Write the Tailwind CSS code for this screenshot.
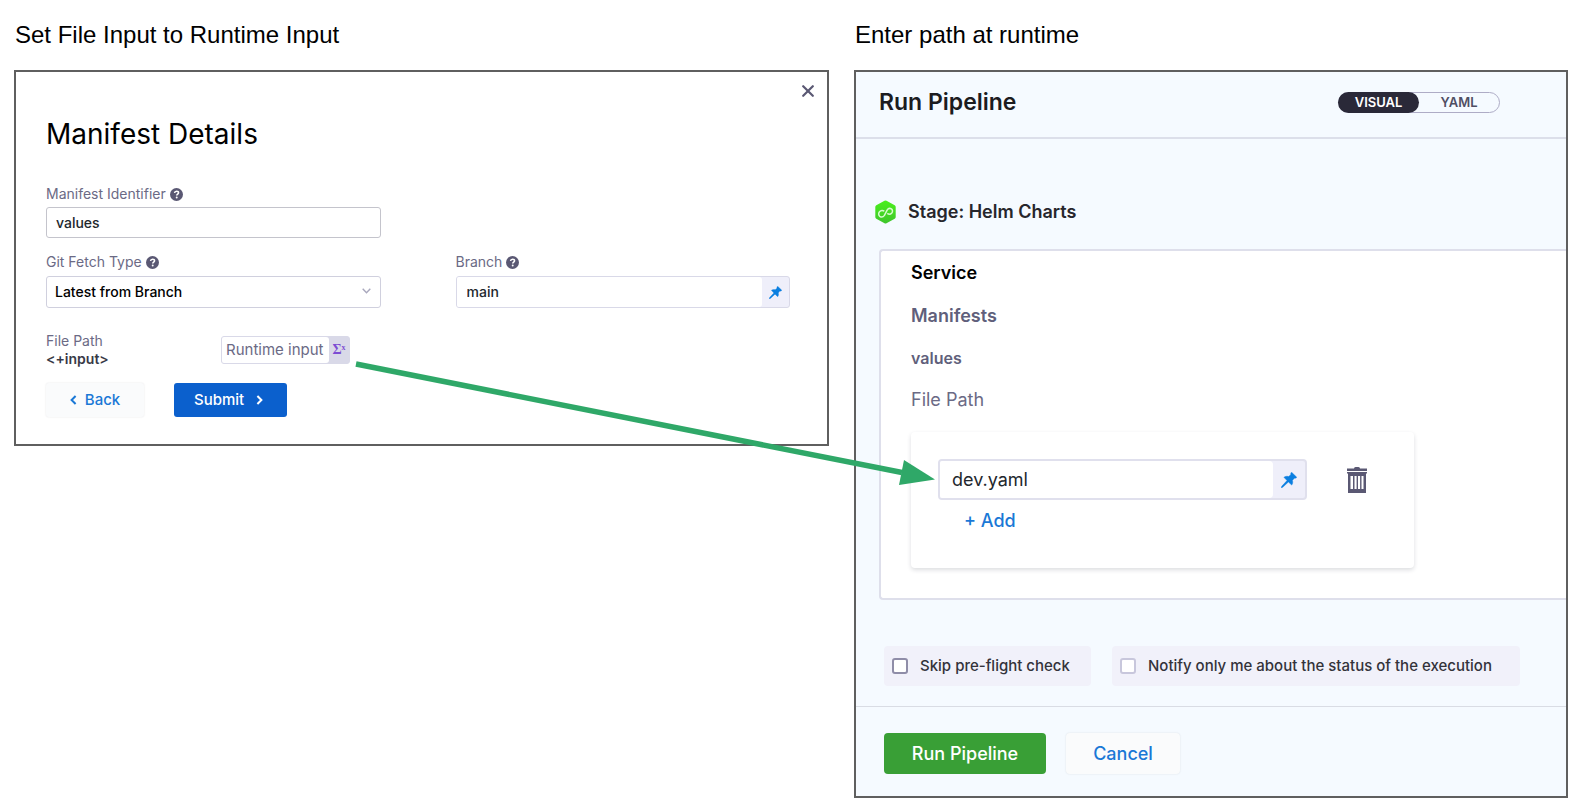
<!DOCTYPE html>
<html lang="en">
<head>
    <meta charset="UTF-8">
    <meta name="viewport" content="width=device-width, initial-scale=1.0">
    <title>Runtime Input</title>
    <script src="https://cdn.jsdelivr.net/npm/@tailwindcss/browser@4"></script>
</head>
<body class="bg-white text-black font-['Inter',sans-serif]">

    <!-- Shared icons -->
    <svg class="hidden">
        <symbol id="help" viewBox="0 0 12 12">
            <circle cx="6" cy="6" r="6" fill="#5a5873"/>
            <path d="M4.2 4.6C4.3 3.4 5 2.9 6.1 2.9c1.1 0 1.8.6 1.8 1.5C7.9 5.6 6.2 5.7 6.2 7" fill="none" stroke="#fff" stroke-width="1.4"/>
            <circle cx="6.2" cy="8.8" r=".9" fill="#fff"/>
        </symbol>
        <symbol id="pin" viewBox="0 0 16 16">
            <path d="M10.6.2 15.8 5.3C15 6.3 14.2 6.5 13.3 6.2L11.4 8.6C12.1 10.3 11.7 12 10.7 13.1L7.4 10 1.7 15.3.2 15.9.7 14.3 6 8.6 2.9 5.3C4.4 4.2 6 4 7.5 4.6L9.8 2.7C9.5 1.8 9.8.9 10.6.2Z" fill="#0b7fe0" stroke="#0b7fe0" stroke-width=".4"/>
        </symbol>
    </svg>

    <main class="relative grid grid-cols-[815fr_714fr] items-start gap-x-[25px] pt-[19px] pr-[10px] pl-[14px]">

        <!-- Manifest details -->
        <section>
            <h2 class="mb-[19px] pl-px font-['Liberation_Sans',sans-serif] text-2xl">Set File Input to Runtime Input</h2>

            <form class="relative border-2 border-[#5f5f5f] pt-[42px] pr-[37px] pb-[27px] pl-[30px]">
                <button type="button" aria-label="Close" class="absolute top-[13px] right-[13px]">
                    <svg class="size-3" viewBox="0 0 12 12"><path d="M1.2 1.2 10.8 10.8M10.8 1.2 1.2 10.8" stroke="#5a5873" stroke-width="2.2" stroke-linecap="round"/></svg>
                </button>

                <h1 class="text-[28px] leading-10">Manifest Details</h1>

                <div class="mt-[30px] grid grid-cols-2 gap-x-[75px] gap-y-[14px]">
                    <div>
                        <div class="flex h-5 items-center gap-1 text-sm text-[#6b6a85]">
                            <label for="identifier">Manifest Identifier</label>
                            <svg class="size-[13px]"><use href="#help"/></svg>
                        </div>
                        <input id="identifier" type="text" value="values" class="mt-[3px] h-[31px] w-full rounded-[3px] border border-[#c4c4cc] px-[9px] text-sm font-medium text-[#22272d]">
                    </div>
                    <div></div>
                    <div>
                        <div class="flex h-5 items-center gap-1 text-sm text-[#6b6a85]">
                            <label for="fetch">Git Fetch Type</label>
                            <svg class="size-[13px]"><use href="#help"/></svg>
                        </div>
                        <div class="relative mt-1">
                            <select id="fetch" class="h-8 w-full appearance-none rounded-[3px] border border-[#d0d0de] px-2 text-sm font-medium">
                                <option>Latest from Branch</option>
                            </select>
                            <svg class="pointer-events-none absolute top-3 right-[10px] h-[6px] w-[9px]" viewBox="0 0 9 6"><path d="M.7.8 4.5 4.8 8.3.8" fill="none" stroke="#a9a8bd" stroke-width="1.4"/></svg>
                        </div>
                    </div>
                    <div>
                        <div class="flex h-5 items-center gap-1 text-sm text-[#6b6a85]">
                            <label for="branch">Branch</label>
                            <svg class="size-[13px]"><use href="#help"/></svg>
                        </div>
                        <div class="mt-1 flex h-8 overflow-hidden rounded-[3px] border border-[#d9d9e8] bg-[#efeffa]">
                            <input id="branch" type="text" value="main" class="min-w-0 flex-1 rounded-r-[3px] bg-white px-[10px] text-sm font-medium text-[#22272d]">
                            <button type="button" aria-label="Value type" class="grid w-[27px] place-items-center"><svg class="size-[13px]"><use href="#pin"/></svg></button>
                        </div>
                    </div>
                </div>

                <div class="mt-[23px] flex items-start">
                    <div class="w-[175px] text-sm leading-5 text-[#6b6a85]">
                        <label for="path">File Path</label>
                        <p class="text-sm leading-4 font-semibold text-[#383946]">&lt;+input&gt;</p>
                    </div>
                    <div class="mt-[5px] flex h-7 overflow-hidden rounded-[3px] border border-[#d9d9e8] bg-[#d9d9e8]">
                        <input id="path" type="text" value="Runtime input" readonly class="w-[107px] rounded-r-[3px] bg-white px-1 text-[15px] text-[#6b6a85]">
                        <button type="button" aria-label="Value type" class="w-5 font-['Liberation_Serif',serif] text-sm font-bold text-[#7d4dd3]">Σ<sup class="text-[8px]">x</sup></button>
                    </div>
                </div>

                <div class="mt-4 flex gap-[30px]">
                    <button type="button" class="flex h-[34px] w-[98px] items-center justify-center gap-2 rounded-[3px] bg-[#fafbfc] text-[15px] font-medium text-[#1a78d6] shadow-[0_0_2px_rgba(40,41,61,0.12)]">
                        <svg class="h-[10px] w-[7px]" viewBox="0 0 7 10"><path d="M5.6 1 1.6 5 5.6 9" fill="none" stroke="#1a78d6" stroke-width="2"/></svg>
                        Back
                    </button>
                    <button type="submit" class="flex h-[34px] w-[113px] items-center gap-3 rounded-[3px] bg-[#0b60cd] pl-5 text-[15px] font-medium text-white">
                        Submit
                        <svg class="h-[10px] w-[7px]" viewBox="0 0 7 10"><path d="M1.4 1 5.4 5 1.4 9" fill="none" stroke="#fff" stroke-width="2"/></svg>
                    </button>
                </div>
            </form>
        </section>

        <!-- Run pipeline -->
        <section>
            <h2 class="mb-[19px] pl-px font-['Liberation_Sans',sans-serif] text-2xl">Enter path at runtime</h2>

            <form class="border-2 border-[#5f5f5f] bg-[#f5faff]">
                <header class="flex h-[67px] items-center justify-between border-b-2 border-[#dcdfea] pr-[66px] pb-1 pl-[23px]">
                    <h1 class="text-[23px] font-semibold text-[#1c1c1f]">Run Pipeline</h1>
                    <div class="flex h-[21px] w-[162px] rounded-full border border-[#aeacc6] text-[13px] font-semibold">
                        <button type="button" class="-my-px -ml-px w-[81px] rounded-full bg-[#2a2938] text-white">VISUAL</button>
                        <button type="button" class="flex-1 text-[#4f4e63]">YAML</button>
                    </div>
                </header>

                <div class="mt-[61px] flex h-6 items-center gap-3 pl-[19px]">
                    <svg class="h-6 w-[21px]" viewBox="0 0 21 24">
                        <defs><linearGradient id="hex" x1="0" y1="0" x2="0" y2="1"><stop offset="0" stop-color="#4af01c"/><stop offset="1" stop-color="#3fc52c"/></linearGradient></defs>
                        <path d="M9.5.7q1-.6 2 0l8.2 4.6q1 .6 1 1.7v10q0 1.1-1 1.7l-8.2 4.6q-1 .6-2 0L1.300 18.700q-1-.6-1-1.700V7q0-1.100 1-1.700Z" fill="url(#hex)"/>
                        <path d="M9.3 11.3C8 10.2 5.8 10.3 4.5 11.7c-1.3 1.5-1 3.6.3 4.6 1.5 1 3.5.6 4.6-.9l2.7-5.3c1-1.6 2.8-2.1 4.3-1.2 1.3 1 1.5 2.8.4 4.1-1.2 1.3-3.2 1.4-4.5.4" fill="none" stroke="#d8fbd0" stroke-width="1.5"/>
                    </svg>
                    <h2 class="text-lg font-semibold text-[#26262c]">Stage: Helm Charts</h2>
                </div>

                <div class="mt-[25px] ml-[23px] rounded-l-[4px] border-y-2 border-l-2 border-[#dedfeb] bg-white pt-[10px] pb-[30px] pl-[30px]">
                    <h3 class="text-lg leading-6 font-semibold">Service</h3>
                    <h4 class="mt-[19px] text-lg leading-6 font-semibold text-[#605f7b]">Manifests</h4>
                    <h5 class="mt-[18px] text-base leading-6 font-semibold text-[#605f7b]">values</h5>
                    <label for="file" class="mt-[18px] block text-lg leading-6 text-[#6b6a85]">File Path</label>
                    <div class="mt-5 w-[503px] rounded-[4px] bg-white px-[27px] pt-[27px] pb-[35px] shadow-[0_2px_4px_rgba(40,41,61,0.16)]">
                        <div class="flex items-center gap-10">
                            <div class="flex h-[41px] w-[369px] overflow-hidden rounded-[4px] border-2 border-[#e0e0ed] bg-[#efeffa]">
                                <input id="file" type="text" value="dev.yaml" class="min-w-0 flex-1 rounded-r-[4px] bg-white px-3 text-lg text-[#22272d]">
                                <button type="button" aria-label="Value type" class="grid w-8 place-items-center"><svg class="size-4"><use href="#pin"/></svg></button>
                            </div>
                            <button type="button" aria-label="Delete">
                                <svg class="h-[26px] w-5" viewBox="0 0 20 26" fill="#5a5873">
                                    <path d="M0 1.5H7Q7 0 8.5 0h3Q13 0 13 1.5h7V4H0ZM0 5H20V6.5H19V26H1V6.5H0Z"/>
                                    <path d="M3.5 9H6V22H3.5ZM7.5 9H9.6V22H7.5ZM11 9h2.1V22H11ZM14.5 9H16.5V22H14.5Z" fill="#fff"/>
                                </svg>
                            </button>
                        </div>
                        <button type="button" class="mt-[9px] ml-[26px] block text-lg leading-6 font-medium text-[#1a78d6]">+ Add</button>
                    </div>
                </div>

                <div class="mt-[46px] flex gap-[21px] px-7 text-[15px] font-medium text-[#33333a]">
                    <label class="flex h-10 w-[207px] items-center gap-3 rounded-[4px] bg-[#f1f1fa] pl-2 whitespace-nowrap">
                        <input type="checkbox" class="size-4 appearance-none rounded-[3px] border-2 border-[#8f8da8] bg-white">
                        Skip pre-flight check
                    </label>
                    <label class="flex h-10 w-[408px] items-center gap-3 rounded-[4px] bg-[#f1f1fa] pl-2 whitespace-nowrap">
                        <input type="checkbox" class="size-4 appearance-none rounded-[3px] border-2 border-[#c8c7dc] bg-white">
                        Notify only me about the status of the execution
                    </label>
                </div>

                <footer class="mt-5 flex gap-5 border-t border-[#d9dce4] px-7 pt-[26px] pb-[22px] text-lg font-medium">
                    <button type="submit" class="h-[41px] w-[162px] rounded-[4px] bg-[#399f36] text-white">Run Pipeline</button>
                    <button type="button" class="h-[41px] w-[114px] rounded-[4px] bg-[#fafbfc] text-[#1a78d6] shadow-[0_0_2px_rgba(40,41,61,0.12)]">Cancel</button>
                </footer>
            </form>
        </section>

        <!-- Arrow from the runtime input to the file path -->
        <svg class="pointer-events-none absolute top-[356px] left-[350px] h-[134px] w-[590px]" viewBox="0 0 590 134">
            <path d="M6 8 552 116.5" stroke="#2fa868" stroke-width="5.5"/>
            <path d="M585 123.500 554 104 549 129Z" fill="#2fa868"/>
        </svg>
    </main>

</body>
</html>
